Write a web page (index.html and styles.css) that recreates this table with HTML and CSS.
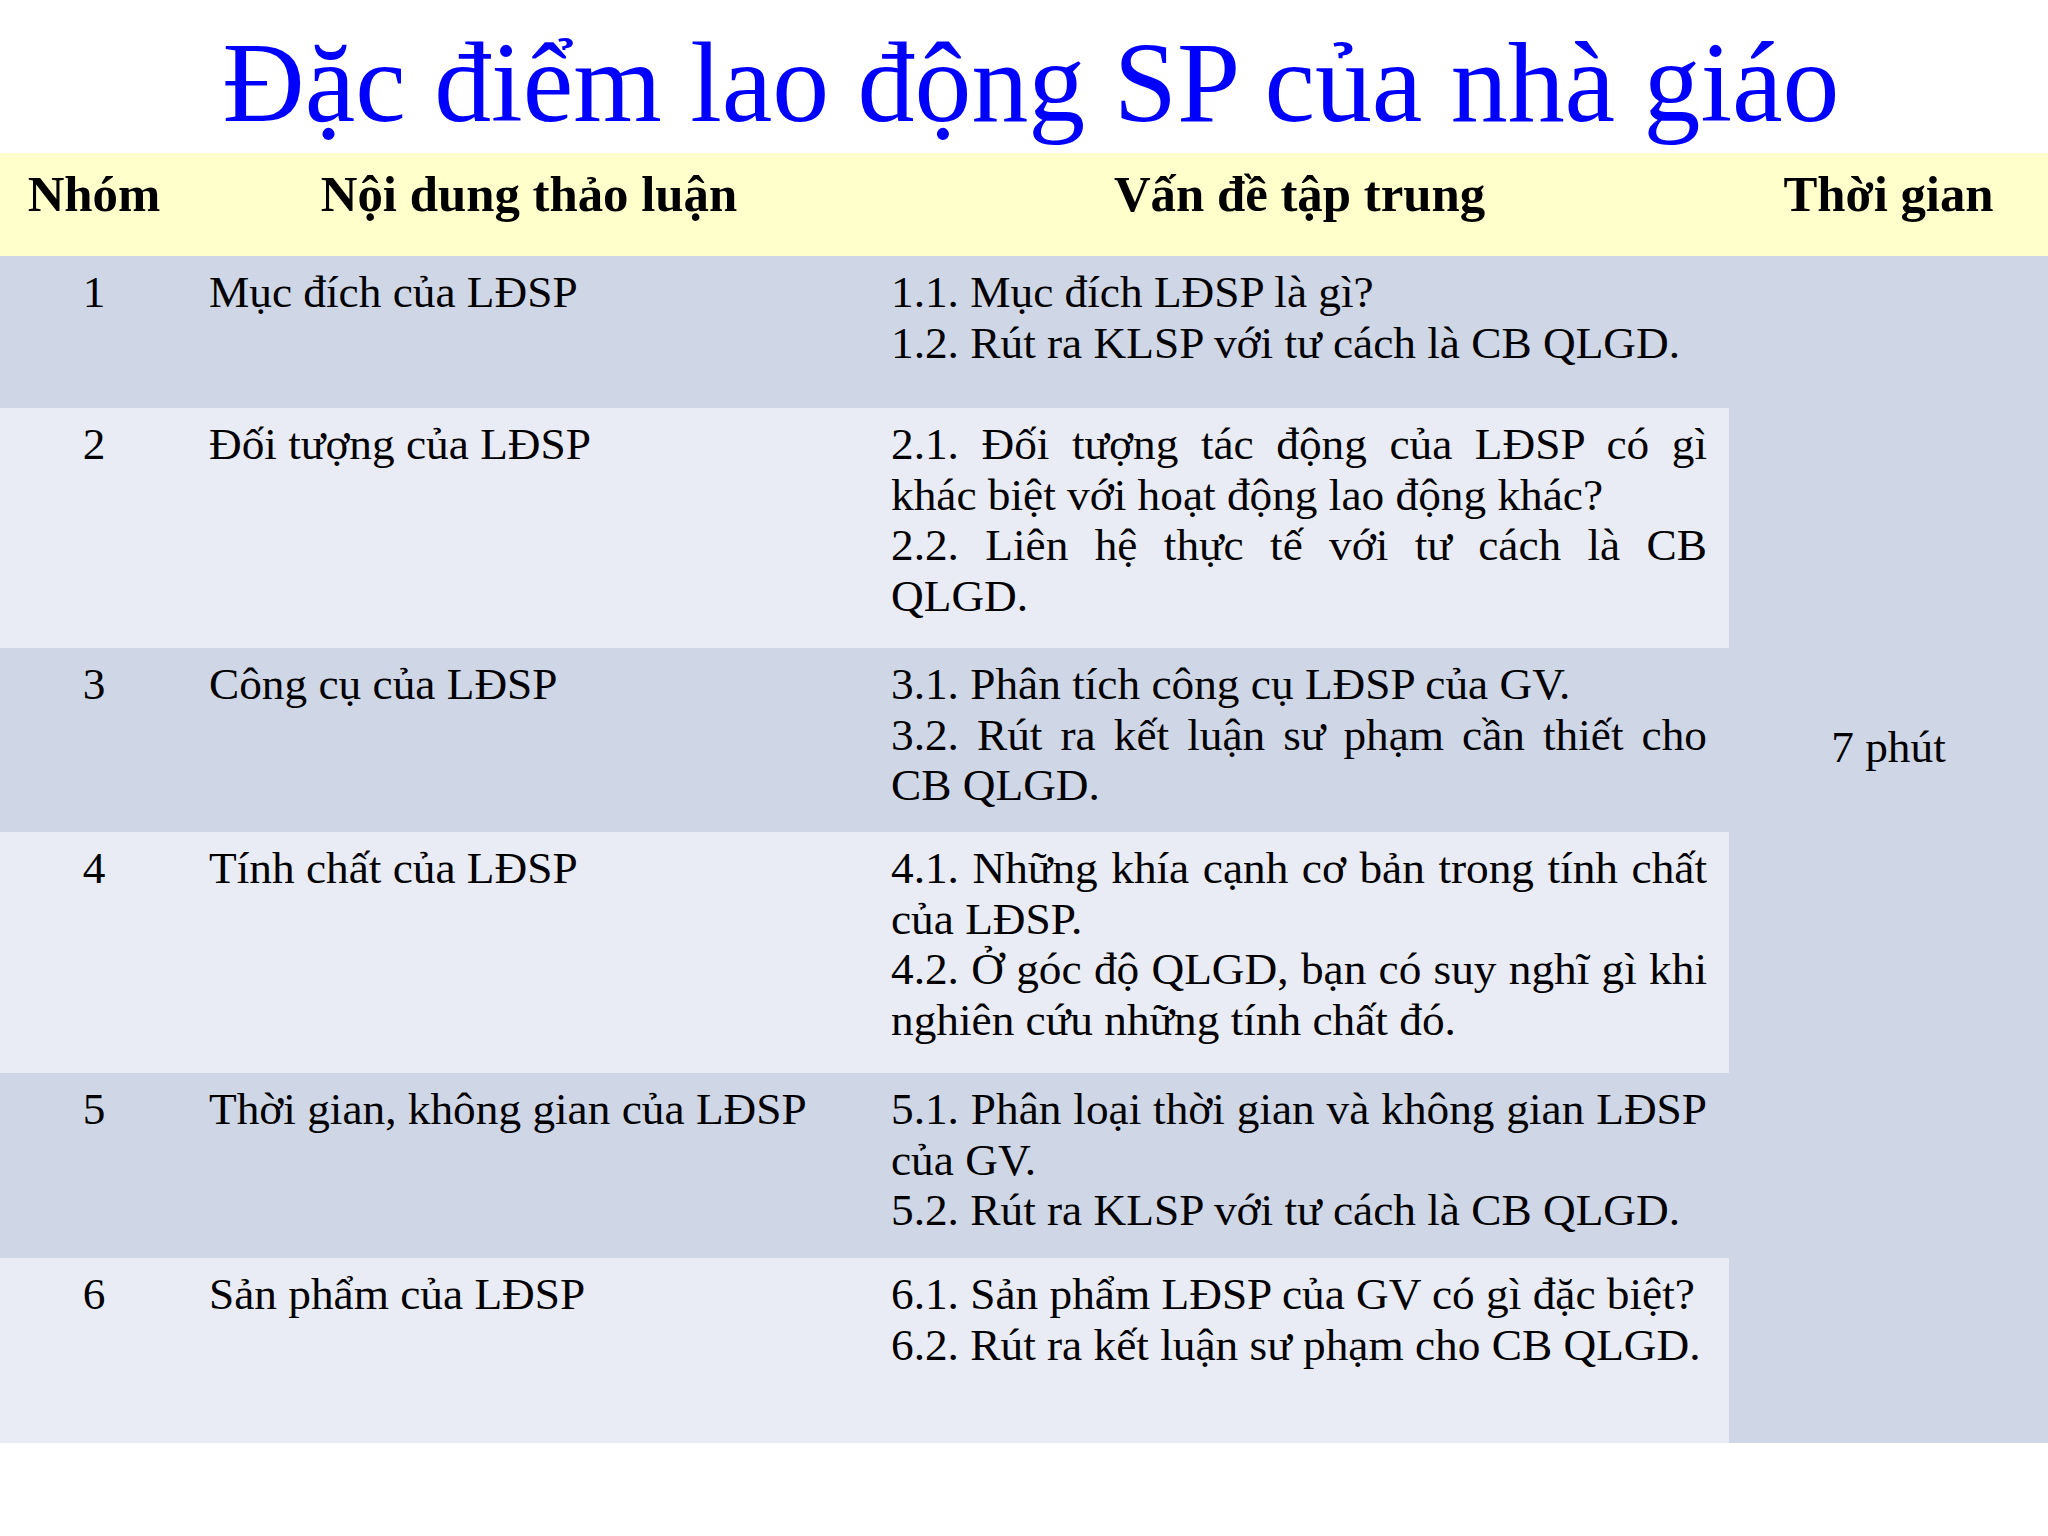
FILE: index.html
```html
<!DOCTYPE html>
<html lang="vi">
<head>
<meta charset="utf-8">
<title>Đặc điểm lao động SP của nhà giáo</title>
<link rel="stylesheet" href="styles.css">
</head>
<body>
<div class="slide">
  <h1 class="title">Đặc điểm lao động SP của nhà giáo</h1>
  <table class="grid">
    <colgroup>
      <col class="c1"><col class="c2"><col class="c3"><col class="c4">
    </colgroup>
    <thead>
      <tr class="head">
        <th>Nhóm</th>
        <th>Nội dung thảo luận</th>
        <th>Vấn đề tập trung</th>
        <th>Thời gian</th>
      </tr>
    </thead>
    <tbody>
      <tr class="dark r1">
        <td class="num">1</td>
        <td class="topic">Mục đích của LĐSP</td>
        <td class="focus"><p>1.1. Mục đích LĐSP là gì?</p><p>1.2. Rút ra KLSP với tư cách là CB QLGD.</p></td>
        <td class="time" rowspan="6">7 phút</td>
      </tr>
      <tr class="light r2">
        <td class="num">2</td>
        <td class="topic">Đối tượng của LĐSP</td>
        <td class="focus"><p>2.1. Đối tượng tác động của LĐSP có gì khác biệt với hoạt động lao động khác?</p><p>2.2. Liên hệ thực tế với tư cách là CB QLGD.</p></td>
      </tr>
      <tr class="dark r3">
        <td class="num">3</td>
        <td class="topic">Công cụ của LĐSP</td>
        <td class="focus"><p>3.1. Phân tích công cụ LĐSP của GV.</p><p>3.2. Rút ra kết luận sư phạm cần thiết cho CB QLGD.</p></td>
      </tr>
      <tr class="light r4">
        <td class="num">4</td>
        <td class="topic">Tính chất của LĐSP</td>
        <td class="focus"><p>4.1. Những khía cạnh cơ bản trong tính chất của LĐSP.</p><p>4.2. Ở góc độ QLGD, bạn có suy nghĩ gì khi nghiên cứu những tính chất đó.</p></td>
      </tr>
      <tr class="dark r5">
        <td class="num">5</td>
        <td class="topic">Thời gian, không gian của LĐSP</td>
        <td class="focus"><p>5.1. Phân loại thời gian và không gian LĐSP của GV.</p><p>5.2. Rút ra KLSP với tư cách là CB QLGD.</p></td>
      </tr>
      <tr class="light r6">
        <td class="num">6</td>
        <td class="topic">Sản phẩm của LĐSP</td>
        <td class="focus"><p>6.1. Sản phẩm LĐSP của GV có gì đặc biệt?</p><p>6.2. Rút ra kết luận sư phạm cho CB QLGD.</p></td>
      </tr>
    </tbody>
  </table>
</div>
</body>
</html>
```

FILE: styles.css
```css
html, body {
  margin: 0;
  padding: 0;
  background: #ffffff;
}

.slide {
  width: 2048px;
  height: 1536px;
  background: #ffffff;
  font-family: "Liberation Serif", "Times New Roman", serif;
  color: #000000;
}

.title {
  margin: 0;
  box-sizing: border-box;
  height: 153px;
  padding-top: 27px;
  padding-left: 14px;
  font-size: 113.8px;
  line-height: 113px;
  font-weight: normal;
  color: #0000ff;
  text-align: center;
  white-space: nowrap;
}

.grid {
  width: 2048px;
  border-collapse: collapse;
  border-spacing: 0;
  table-layout: fixed;
}

.c1 { width: 188px; }
.c2 { width: 682px; }
.c3 { width: 859px; }
.c4 { width: 319px; }

.grid th,
.grid td {
  padding: 0;
  vertical-align: top;
  box-sizing: border-box;
}

.head {
  height: 103px;
  background: #ffffcc;
}

.head th {
  padding-top: 13px;
  font-size: 50.8px;
  line-height: 56px;
  font-weight: bold;
  text-align: center;
  white-space: nowrap;
}

.grid td {
  font-size: 45.3px;
  line-height: 50.5px;
  padding-top: 11px;
}

.dark td { background: #cfd7e6; }
.light td { background: #e9ecf5; }

.r1 { height: 152px; }
.r2 { height: 240px; }
.r3 { height: 184px; }
.r4 { height: 241px; }
.r5 { height: 185px; }
.r6 { height: 185px; }

.grid td.num {
  text-align: center;
}

.grid td.topic {
  padding-left: 21px;
  white-space: nowrap;
}

.grid td.focus {
  padding-left: 21px;
  padding-right: 22px;
  text-align: justify;
}

.focus p {
  margin: 0;
}

.grid td.time {
  background: #cfd7e6;
  text-align: center;
  padding-top: 466px;
}
```
